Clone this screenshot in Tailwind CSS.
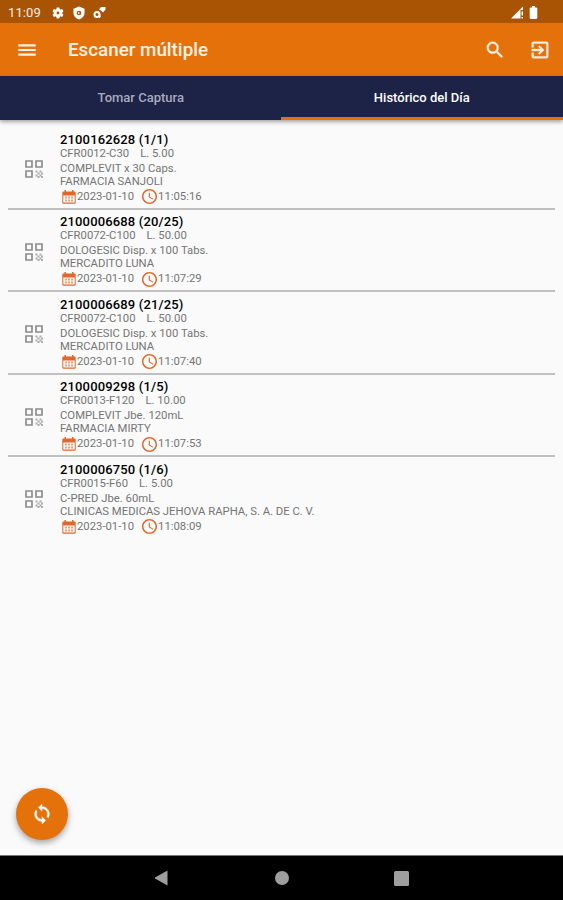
<!DOCTYPE html>
<html lang="es">
<head>
  <meta charset="UTF-8" />
  <meta name="viewport" content="width=device-width, initial-scale=1.0" />
  <title>Escaner múltiple</title>
  <script src="https://cdn.jsdelivr.net/npm/@tailwindcss/browser@4"></script>
</head>
<body class="bg-[#fafafa] font-[Roboto,sans-serif]">
  <!-- Shared icons -->
  <svg class="hidden">
    <symbol id="qr" viewBox="0 0 18 18">
      <path d="M1 1h6v6H1zM11 1h6v6h-6zM1 11h6v6H1z" fill="none" stroke="currentColor" stroke-width="1.700" />
      <path d="M10.500 10.500h2v2h-2zM12.500 12.500h2v2h-2zM10.500 14.500h2v2h-2zM14.500 10.500h2v2h-2zM16 12.500h2v2h-2zM14.500 14.500h2v2h-2zM12.500 16h2v2h-2zM16 16h2v2h-2z" fill="currentColor" opacity=".7" />
    </symbol>
    <symbol id="calendar" viewBox="0 0 14 14">
      <path d="M2.500 0h1.500v1.500h6V0h1.500v1.500H12.500a1.200 1.200 0 0 1 1.200 1.200V12.500a1.200 1.200 0 0 1-1.200 1.200H1.500A1.200 1.200 0 0 1 .3 12.500V2.700a1.200 1.200 0 0 1 1.200-1.200h1zM1.300 5.500v7h11.400v-7z" fill-rule="evenodd" />
      <path d="M3 6.500h2v2H3zM6 6.500h2v2H6zM9 6.500h2v2H9zM3 9.500h2v2H3zM6 9.500h2v2H6zM9 9.500h2v2H9z" opacity=".6" />
    </symbol>
    <symbol id="clock" viewBox="2 2 20 20">
      <path d="M11.990 2C6.470 2 2 6.480 2 12s4.470 10 9.990 10C17.520 22 22 17.520 22 12S17.520 2 11.990 2zM12 20c-4.420 0-8-3.580-8-8s3.580-8 8-8 8 3.580 8 8-3.580 8-8 8zm.5-13H11v6l5.250 3.150.75-1.230-4.500-2.670z" />
    </symbol>
  </svg>

  <div class="flex h-[900px] w-[563px] flex-col overflow-hidden">
    <!-- Status bar -->
    <div class="flex h-[23px] shrink-0 items-center bg-[#a95304] pt-0.5 pl-2 text-white">
      <span class="w-[43px] text-[13px] leading-none tracking-[0.1px] text-white/90">11:09</span>
      <svg class="h-[14px] w-[14px]" viewBox="0 0 24 24" fill="currentColor"><path d="M19.140 12.940c.04-.3.060-.61.060-.94s-.02-.64-.07-.94l2.030-1.580a.49.49 0 0 0 .12-.61l-1.920-3.320a.49.49 0 0 0-.59-.22l-2.390.96a7 7 0 0 0-1.620-.94l-.36-2.540A.48.48 0 0 0 13.920 2.400h-3.840a.48.48 0 0 0-.48.410l-.36 2.540c-.59.24-1.130.57-1.620.94l-2.390-.96a.48.48 0 0 0-.59.22L2.740 8.870a.48.48 0 0 0 .12.610l2.030 1.580a6 6 0 0 0 0 1.880l-2.030 1.580a.49.49 0 0 0-.12.610l1.920 3.320c.12.220.37.290.59.220l2.390-.96c.5.380 1.030.7 1.620.94l.36 2.540c.05.240.24.410.48.410h3.840c.24 0 .44-.17.470-.41l.36-2.540a7 7 0 0 0 1.620-.94l2.390.96c.22.080.47 0 .59-.22l1.920-3.320a.48.48 0 0 0-.12-.61zM12 14.500A2.500 2.500 0 1 1 12 9.500a2.500 2.500 0 0 1 0 5z" /></svg>
      <svg class="ml-[7px] h-[14px] w-[14px]" viewBox="0 0 24 24" fill="currentColor" fill-rule="evenodd"><path d="M12 1 2.500 4.500V12c0 5 4 9.500 9.500 11 5.500-1.500 9.500-6 9.500-11V4.500zM12 8a4 4 0 1 1 0 8 4 4 0 0 1 0-8zm-1.500 2v4l3.500-2z" /></svg>
      <svg class="ml-[7px] h-[13px] w-[13px]" viewBox="0 0 13 13" fill="none" stroke="currentColor"><circle cx="4" cy="8.500" r="2.500" stroke-width="2" /><path d="M6 11.500l1.500-2" stroke-width="1.500" /><path d="M6 3.500 8 1h4.500v2.500L10 6.500 8.500 5z" fill="currentColor" stroke="none" /></svg>
      <svg class="ml-auto h-[13px] w-[13px]" viewBox="0 0 13 13" fill="currentColor"><path d="M0 12.500 9.500 3v9.500z" /><path d="M9.500 3 12 .5V4H9.500zM10.500 5.500H12v4h-1.500zM10.500 11H12v1.500h-1.500z" /></svg>
      <svg class="mr-[25px] ml-[5px] h-[13px] w-[9px]" viewBox="0 0 9 13" fill="currentColor"><path d="M3 0h3v1.500h1.200q1.100 0 1.100 1.100v9.200q0 1.100-1.100 1.100H1.800q-1.100 0-1.100-1.100V2.600q0-1.100 1.100-1.100H3z" /></svg>
    </div>

    <!-- App bar -->
    <header class="flex h-[53px] shrink-0 items-center bg-[#e5710a] pl-4 text-[#fff1e6]">
      <svg class="h-[22px] w-[22px]" viewBox="0 0 24 24" fill="currentColor"><path d="M2.500 18.200h19v-2.500h-19zm0-5h19v-2.400h-19zm0-7.500v2.500h19V5.700z" /></svg>
      <h1 class="mt-0.5 ml-[30px] text-[18.800px] font-medium">Escaner múltiple</h1>
      <svg class="mr-[23px] ml-auto h-[22px] w-[22px]" viewBox="0 0 24 24" fill="currentColor" stroke="currentColor" stroke-width=".4"><path d="M15.500 14h-.79l-.28-.27C15.410 12.590 16 11.110 16 9.500 16 5.910 13.090 3 9.500 3S3 5.910 3 9.500 5.910 16 9.500 16c1.610 0 3.090-.59 4.230-1.570l.27.280v.79l5 4.990L20.490 19l-4.990-5zm-6 0C7.010 14 5 11.990 5 9.500S7.010 5 9.500 5 14 7.010 14 9.500 11.990 14 9.500 14z" /></svg>
      <svg class="mr-3 h-[22px] w-[22px]" viewBox="0 0 24 24" fill="currentColor" stroke="currentColor" stroke-width=".4"><path d="M10.090 15.590 11.500 17l5-5-5-5-1.410 1.410L12.670 11H3v2h9.670l-2.580 2.590zM19 3H5c-1.110 0-2 .9-2 2v4h2V5h14v14H5v-4H3v4c0 1.100.89 2 2 2h14c1.100 0 2-.9 2-2V5c0-1.100-.9-2-2-2z" /></svg>
    </header>

    <!-- Tabs -->
    <nav class="grid h-11 shrink-0 grid-cols-2 grid-rows-[44px] bg-[#1d2247] text-center text-[13px] leading-[43px] font-medium shadow-[0_2px_4px_rgba(0,0,0,0.35)]">
      <div class="text-[#a9abbd]">Tomar Captura</div>
      <div class="-ml-px border-b-[3px] border-[#e5710a] text-white">Histórico del Día</div>
    </nav>

    <!-- Scans of the day -->
    <main id="scans" class="flex-1 px-2 pt-[7px]"></main>

    <button class="mb-[15px] ml-4 flex size-[52px] shrink-0 items-center justify-center rounded-full bg-[#e5710a] text-white shadow-[0_3px_6px_rgba(0,0,0,0.35)]">
      <svg class="size-[22px]" viewBox="0 0 24 24" fill="currentColor" stroke="currentColor" stroke-width=".5"><path d="M12 4V1L8 5l4 4V6c3.310 0 6 2.690 6 6 0 1.010-.25 1.970-.7 2.800l1.460 1.460C19.540 15.030 20 13.570 20 12c0-4.420-3.580-8-8-8zm0 14c-3.310 0-6-2.690-6-6 0-1.010.25-1.970.7-2.800L5.240 7.740C4.460 8.970 4 10.430 4 12c0 4.420 3.580 8 8 8v3l4-4-4-4v3z" /></svg>
    </button>

    <!-- Android navigation -->
    <footer class="flex h-[45px] shrink-0 items-center justify-center gap-[105px] border-t border-[#777] bg-black text-[#9e9e9e]">
      <svg class="h-4 w-[15px]" viewBox="0 0 15 16" fill="currentColor"><path d="M12.500.5v15L-1 8z" overflow="visible" /></svg>
      <div class="size-[14px] rounded-full bg-[#9e9e9e]"></div>
      <div class="size-[15px] rounded-[1.500px] bg-[#9e9e9e]"></div>
    </footer>
  </div>

  <script>
    const scans = [
      { id: "2100162628 (1/1)", code: "CFR0012-C30", price: "L. 5.00", product: "COMPLEVIT x 30 Caps.", client: "FARMACIA SANJOLI", time: "11:05:16" },
      { id: "2100006688 (20/25)", code: "CFR0072-C100", price: "L. 50.00", product: "DOLOGESIC Disp. x 100 Tabs.", client: "MERCADITO LUNA", time: "11:07:29" },
      { id: "2100006689 (21/25)", code: "CFR0072-C100", price: "L. 50.00", product: "DOLOGESIC Disp. x 100 Tabs.", client: "MERCADITO LUNA", time: "11:07:40" },
      { id: "2100009298 (1/5)", code: "CFR0013-F120", price: "L. 10.00", product: "COMPLEVIT Jbe. 120mL", client: "FARMACIA MIRTY", time: "11:07:53" },
      { id: "2100006750 (1/6)", code: "CFR0015-F60", price: "L. 5.00", product: "C-PRED Jbe. 60mL", client: "CLINICAS MEDICAS JEHOVA RAPHA, S. A. DE C. V.", time: "11:08:09" }
    ];

    document.getElementById("scans").innerHTML = scans.map(s => `
      <div class="flex h-[82.500px] items-start border-b-2 border-[#c0c0c0] pl-[17px] last:border-transparent">
        <svg class="mt-[33px] size-[18px] text-[#8c8c8c]"><use href="#qr" /></svg>
        <div class="ml-[17px] pt-[5.600px] text-[11.300px] leading-[14px] text-[#757575]">
          <div class="text-[13px] font-medium tracking-[0.150px] text-black">${s.id}</div>
          <div class="flex gap-[11px]"><span>${s.code}</span><span>${s.price}</span></div>
          <div class="mt-px">${s.product}</div>
          <div class="leading-[12px]">${s.client}</div>
          <div class="mt-px flex h-4 items-center">
            <svg class="mr-0.5 ml-0.5 size-[14px] fill-[#e2672a]"><use href="#calendar" /></svg>
            <span class="-ml-px">2023-01-10</span>
            <svg class="ml-2 size-[15px] fill-[#e2672a]"><use href="#clock" /></svg>
            <span class="ml-px">${s.time}</span>
          </div>
        </div>
      </div>
    `).join("");
  </script>
</body>
</html>
